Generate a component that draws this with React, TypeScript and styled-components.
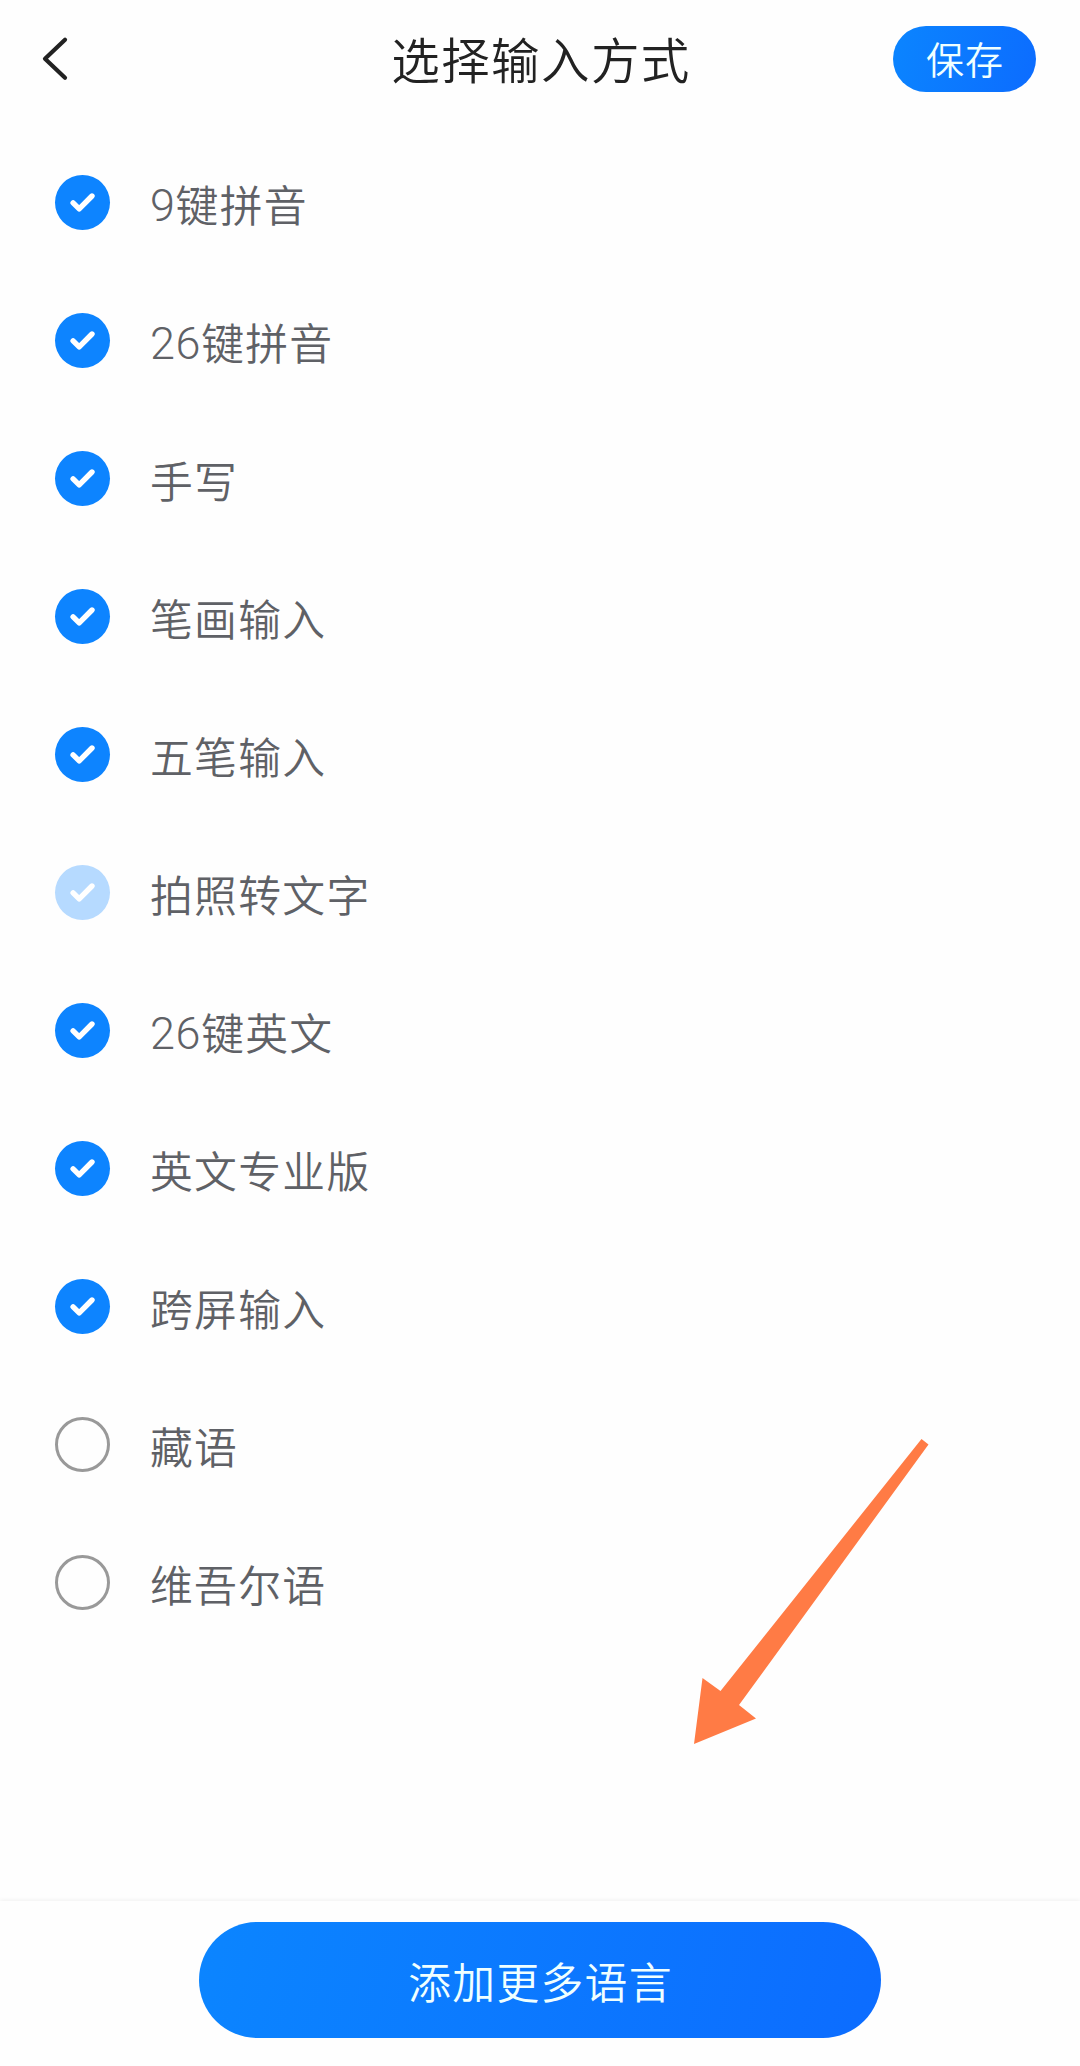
import React from 'react';
import styled, { createGlobalStyle } from 'styled-components';

const GlobalStyle = createGlobalStyle`
  * { box-sizing: border-box; }
  body {
    margin: 0;
    background: #fefefe;
    font-family: "Noto Sans CJK SC", sans-serif;
    font-weight: 350;
  }
  button { font: inherit; border: 0; padding: 0; background: none; }
`;

const Screen = styled.div`
  position: relative;
  display: flex;
  flex-direction: column;
  width: 1080px;
  height: 2066px;
  overflow: hidden;
`;

const Header = styled.header`
  display: grid;
  grid-template-columns: 187px 1fr 143px;
  align-items: center;
  height: 118px;
  padding: 0 44px 0 0;
`;

const BackButton = styled.button`
  display: flex;
  padding-left: 40px;
`;

const Title = styled.h1`
  margin: 0;
  padding: 0 0 3px 2px;
  color: #222;
  font-size: 48.5px;
  font-weight: 350;
  line-height: 70px;
  letter-spacing: 1.4px;
  text-align: center;
`;

const GradientButton = styled.button`
  display: flex;
  align-items: center;
  justify-content: center;
  border-radius: 100px;
  background: linear-gradient(105deg, #0b85ff 0%, #0c6cff 100%);
  color: #f0ffff;
`;

const SaveButton = styled(GradientButton)`
  width: 143px;
  height: 66px;
  font-size: 38px;
  line-height: 60px;
  letter-spacing: 1px;
  padding: 0 0 2px 1px;
`;

const MoreButton = styled(GradientButton)`
  width: 682px;
  height: 116px;
  font-size: 42.8px;
  line-height: 60px;
  letter-spacing: 1.3px;
  padding: 0 0 1px 1px;
`;

const List = styled.ul`
  flex: 1;
  margin: 0;
  padding: 15px 0 0 55px;
  list-style: none;
`;

const Row = styled.li`
  display: flex;
  align-items: center;
  gap: 40px;
  height: 138px;
`;

const Mark = styled.span<{ $state: State }>`
  display: flex;
  width: 55px;
  height: 55px;
  border-radius: 50%;
  border: ${p => (p.$state === 'off' ? '3px solid #999' : '0')};
  background: ${p => ({ on: '#0d84ff', locked: '#b6daff', off: 'transparent' })[p.$state]};
`;

const Label = styled.span`
  padding-top: 2px;
  color: #5f6166;
  font-size: 42.8px;
  line-height: 60px;
  letter-spacing: 1.3px;
`;

const Digits = styled.span`
  font-family: Roboto, sans-serif;
  font-size: 45px;
  font-weight: 300;
  line-height: 1;
  letter-spacing: 0.6px;
  vertical-align: 1px;
`;

const Footer = styled.footer`
  display: flex;
  justify-content: center;
  height: 165px;
  padding-top: 21px;
  box-shadow: 0 -1px 4px rgba(0, 0, 0, 0.06);
`;

const Pointer = styled.svg`
  position: absolute;
  left: 694px;
  top: 1439px;
`;

type State = 'on' | 'locked' | 'off';

const methods: { keys?: number; name: string; state: State }[] = [
  { keys: 9, name: '键拼音', state: 'on' },
  { keys: 26, name: '键拼音', state: 'on' },
  { name: '手写', state: 'on' },
  { name: '笔画输入', state: 'on' },
  { name: '五笔输入', state: 'on' },
  { name: '拍照转文字', state: 'locked' },
  { keys: 26, name: '键英文', state: 'on' },
  { name: '英文专业版', state: 'on' },
  { name: '跨屏输入', state: 'on' },
  { name: '藏语', state: 'off' },
  { name: '维吾尔语', state: 'off' },
];

const Tick = () => (
  <svg width="55" height="55" viewBox="0 0 55 55" fill="none">
    <path d="M18.1 27.9 L24.2 33.9 L37 21" stroke="#fff" strokeWidth="5.4" strokeLinecap="round" strokeLinejoin="round" />
  </svg>
);

export default function App() {
  return (
    <>
      <GlobalStyle />
      <Screen>
        <Header>
          <BackButton aria-label="返回">
            <svg width="32" height="50" viewBox="0 0 32 50" fill="none">
              <path d="M25 5.7 L5 24.7 L25 43.7" stroke="#222" strokeWidth="4.2" strokeLinecap="round" strokeLinejoin="round" />
            </svg>
          </BackButton>
          <Title>选择输入方式</Title>
          <SaveButton>保存</SaveButton>
        </Header>
        <List>
          {methods.map(m => (
            <Row key={`${m.keys ?? ''}${m.name}`}>
              <Mark $state={m.state}>{m.state !== 'off' && <Tick />}</Mark>
              <Label>
                {m.keys && <Digits>{m.keys}</Digits>}
                {m.name}
              </Label>
            </Row>
          ))}
        </List>
        <Footer>
          <MoreButton>添加更多语言</MoreButton>
        </Footer>
        <Pointer width="236" height="306" viewBox="0 0 236 306">
          <path d="M227.5 0 L234.5 5.5 L45 266 L62 279.5 L0 305 L8.5 239 L26.5 252 Z" fill="#ff7b45" />
        </Pointer>
      </Screen>
    </>
  );
}
